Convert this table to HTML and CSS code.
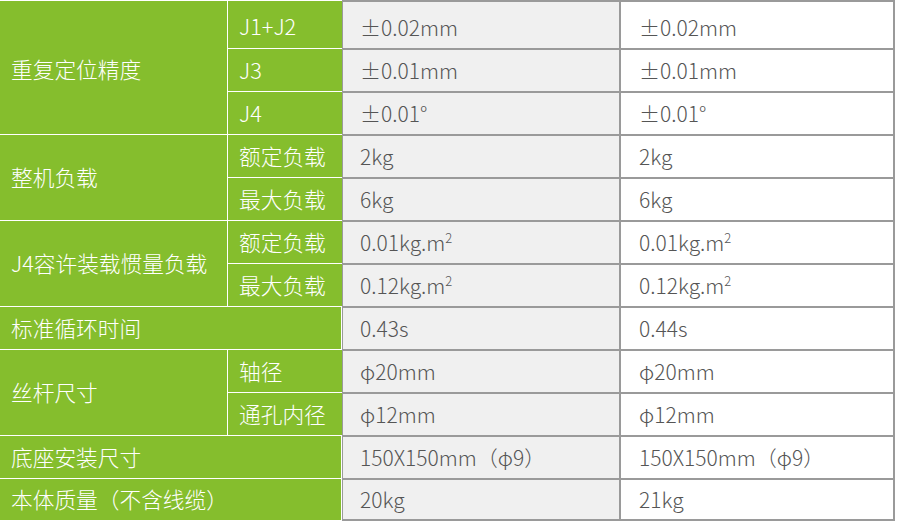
FILE: index.html
```html
<!DOCTYPE html>
<html lang="zh">
<head>
<meta charset="utf-8">
<link rel="stylesheet" href="styles.css">
</head>
<body>
<table class="spec">
  <colgroup>
    <col class="c1"><col class="c2"><col class="c3"><col class="c4">
  </colgroup>
  <tbody>
    <tr class="first">
      <td class="g" rowspan="3">重复定位精度</td>
      <td class="g sub">J1+J2</td>
      <td class="v">±0.02mm</td>
      <td class="w">±0.02mm</td>
    </tr>
    <tr>
      <td class="g sub">J3</td>
      <td class="v">±0.01mm</td>
      <td class="w">±0.01mm</td>
    </tr>
    <tr>
      <td class="g sub">J4</td>
      <td class="v">±0.01°</td>
      <td class="w">±0.01°</td>
    </tr>
    <tr>
      <td class="g" rowspan="2">整机负载</td>
      <td class="g sub">额定负载</td>
      <td class="v">2kg</td>
      <td class="w">2kg</td>
    </tr>
    <tr>
      <td class="g sub">最大负载</td>
      <td class="v">6kg</td>
      <td class="w">6kg</td>
    </tr>
    <tr>
      <td class="g" rowspan="2">J4容许装载惯量负载</td>
      <td class="g sub">额定负载</td>
      <td class="v">0.01kg.m<sup>2</sup></td>
      <td class="w">0.01kg.m<sup>2</sup></td>
    </tr>
    <tr>
      <td class="g sub">最大负载</td>
      <td class="v">0.12kg.m<sup>2</sup></td>
      <td class="w">0.12kg.m<sup>2</sup></td>
    </tr>
    <tr>
      <td class="g" colspan="2">标准循环时间</td>
      <td class="v">0.43s</td>
      <td class="w">0.44s</td>
    </tr>
    <tr>
      <td class="g" rowspan="2">丝杆尺寸</td>
      <td class="g sub">轴径</td>
      <td class="v">φ20mm</td>
      <td class="w">φ20mm</td>
    </tr>
    <tr>
      <td class="g sub">通孔内径</td>
      <td class="v">φ12mm</td>
      <td class="w">φ12mm</td>
    </tr>
    <tr>
      <td class="g" colspan="2">底座安装尺寸</td>
      <td class="v">150X150mm（φ9）</td>
      <td class="w">150X150mm（φ9）</td>
    </tr>
    <tr>
      <td class="g" colspan="2">本体质量（不含线缆）</td>
      <td class="v">20kg</td>
      <td class="w">21kg</td>
    </tr>
  </tbody>
</table>
</body>
</html>
```
FILE: styles.css
```css
html, body {
  margin: 0;
  padding: 0;
  background: #ffffff;
}
body {
  font-family: "Noto Sans CJK SC", "Noto Sans", sans-serif;
  font-size: 21px;
  font-weight: 300;
}
.spec {
  table-layout: fixed;
  border-collapse: separate;
  border-spacing: 0;
  width: 895px;
  margin-top: 0;
}
.c1 { width: 228px; }
.c2 { width: 114px; }
.c3 { width: 279px; }
.c4 { width: 274px; }
.spec td {
  height: 43px;
  box-sizing: border-box;
  vertical-align: middle;
  line-height: 26px;
  white-space: nowrap;
  padding-top: 0;
  padding-bottom: 1px;
}
.spec tr.first td {
  height: 48px;
  padding-top: 4px;
}
.g {
  background: #85be2d;
  color: #ffffff;
  font-size: 21.7px;
  padding-left: 11px;
  border-top: 1px solid #ffffff;
  border-right: 1px solid #ffffff;
}
.g.sub {
  border-right: none;
}
.v {
  background: #f0f0f0;
  color: #555555;
  padding-left: 17px;
  border-top: 2px solid #9a9a9a;
  border-left: 1px solid #9a9a9a;
  border-right: 2px solid #9a9a9a;
}
.w {
  background: #ffffff;
  color: #555555;
  padding-left: 18px;
  border-top: 2px solid #9a9a9a;
  border-right: 2px solid #9a9a9a;
}
.spec tr:last-child td.v,
.spec tr:last-child td.w {
  border-bottom: 2px solid #9a9a9a;
}
.spec tr:last-child td.g {
  border-bottom: 1px solid #ffffff;
}
sup {
  font-size: 13px;
  line-height: 0;
  vertical-align: 8px;
}
```
